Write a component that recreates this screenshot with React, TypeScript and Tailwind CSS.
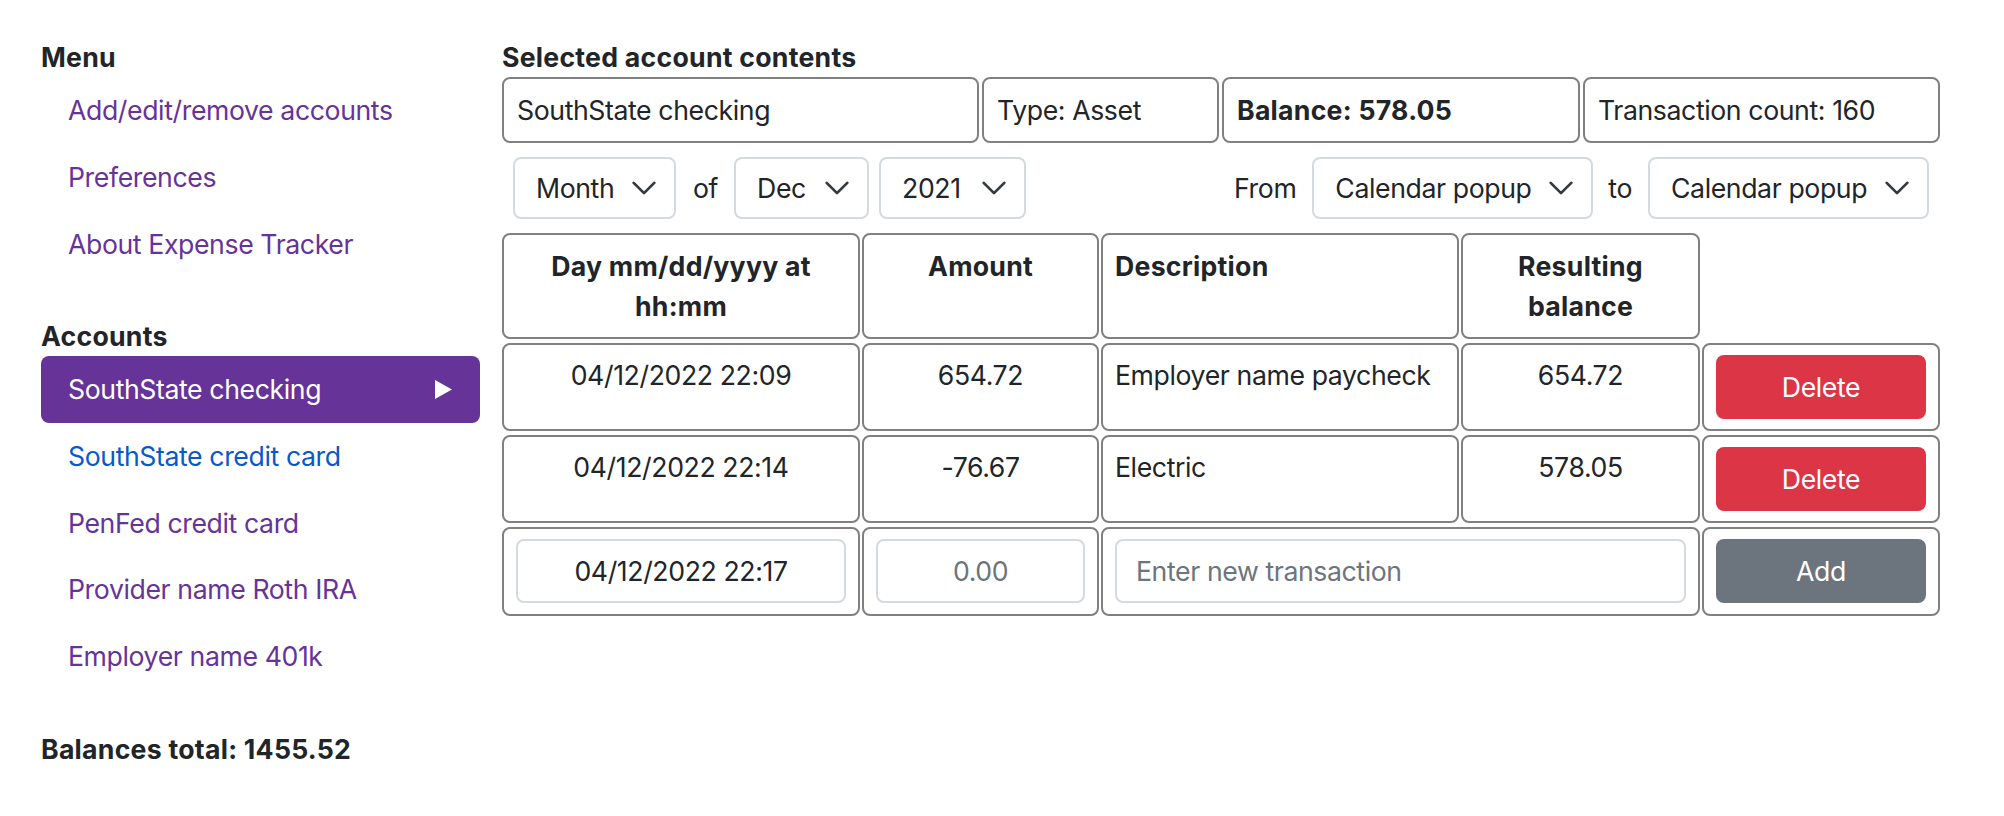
import React from "react";

function Chevron() {
  return (
    <svg width="24" height="14" viewBox="1 4 14 8" fill="none" className="shrink-0">
      <path d="M2 5l6 6 6-6" stroke="#343a40" strokeWidth="1.6" strokeLinecap="round" strokeLinejoin="round" />
    </svg>
  );
}

function Select({ label, w }: { label: string; w: string }) {
  return (
    <div className={`${w} h-[62px] flex items-center justify-between pl-[21px] pr-[18px] border-2 border-[#d5dae0] rounded-[8px] bg-white`}>
      <span>{label}</span>
      <Chevron />
    </div>
  );
}

const cell = "border-2 border-[#808080] rounded-[8px] px-[12px] py-[10px]";

export default function App() {
  const accounts = [
    { name: "SouthState credit card", color: "text-[#0a58ca]" },
    { name: "PenFed credit card", color: "text-[#663399]" },
    { name: "Provider name Roth IRA", color: "text-[#663399]" },
    { name: "Employer name 401k", color: "text-[#663399]" },
  ];
  return (
    <div className="w-[2004px] min-h-[816px] bg-white font-['Inter',sans-serif] text-[26.67px] leading-[40px] tracking-[-0.4px] text-[#212529] flex pl-[41px] pt-[37px]">
      {/* Sidebar */}
      <div className="w-[439px] flex flex-col">
        <div className="font-bold tracking-[0.25px] h-[40px]">Menu</div>
        <div className="flex flex-col">
          {["Add/edit/remove accounts", "Preferences", "About Expense Tracker"].map((t) => (
            <div key={t} className="px-[27px] py-[13.33px] text-[#663399]">{t}</div>
          ))}
        </div>
        <div className="font-bold tracking-[0.25px] h-[40px] mt-[39px]">Accounts</div>
        <div className="flex items-center justify-between px-[27px] py-[13.33px] bg-[#663399] text-white rounded-[8px]">
          <span>SouthState checking</span>
          <svg width="17" height="19" viewBox="0 0 17 19" className="mr-[1px]">
            <polygon points="0,0 17,9.5 0,19" fill="#ffffff" />
          </svg>
        </div>
        <div className="flex flex-col">
          {accounts.map((a) => (
            <div key={a.name} className={`px-[27px] py-[13.33px] ${a.color}`}>{a.name}</div>
          ))}
        </div>
        <div className="font-bold tracking-[0.25px] h-[40px] mt-[40px]">Balances total: 1455.52</div>
      </div>

      {/* Main */}
      <div className="ml-[22px] w-[1438px] flex flex-col">
        <div className="font-bold tracking-[0.25px] h-[40px]">Selected account contents</div>
        <div className="grid grid-cols-[477px_237px_358px_357px] gap-[3px]">
          <div className="border-2 border-[#808080] rounded-[8px] px-[13px] py-[11px]">SouthState checking</div>
          <div className="border-2 border-[#808080] rounded-[8px] px-[13px] py-[11px]">Type: Asset</div>
          <div className="border-2 border-[#808080] rounded-[8px] px-[13px] py-[11px] font-bold tracking-[0.25px]">Balance: 578.05</div>
          <div className="border-2 border-[#808080] rounded-[8px] px-[13px] py-[11px]">Transaction count: 160</div>
        </div>

        <div className="mt-[14px] flex items-center justify-between px-[11px]">
          <div className="flex items-center">
            <Select label="Month" w="w-[163px]" />
            <span className="ml-[17px] mr-[16px]">of</span>
            <Select label="Dec" w="w-[135px]" />
            <div className="w-[10px]" />
            <Select label="2021" w="w-[147px]" />
          </div>
          <div className="flex items-center">
            <span className="mr-[16px]">From</span>
            <Select label="Calendar popup" w="w-[281px]" />
            <span className="ml-[15px] mr-[16px]">to</span>
            <Select label="Calendar popup" w="w-[281px]" />
          </div>
        </div>

        <div className="mt-[14px] grid grid-cols-[358px_237px_358px_239px_238px] gap-x-[2px] gap-y-[4px]">
          <div className={`${cell} py-[11px] font-bold tracking-[0.25px] text-center`}>Day mm/dd/yyyy at<br />hh:mm</div>
          <div className={`${cell} py-[11px] font-bold tracking-[0.25px] text-center`}>Amount</div>
          <div className={`${cell} py-[11px] font-bold tracking-[0.25px]`}>Description</div>
          <div className={`${cell} py-[11px] font-bold tracking-[0.25px] text-center`}>Resulting<br />balance</div>
          <div />

          <div className={`${cell} text-center`}>04/12/2022 22:09</div>
          <div className={`${cell} text-center`}>654.72</div>
          <div className={cell}>Employer name paycheck</div>
          <div className={`${cell} text-center`}>654.72</div>
          <div className={cell}>
            <button className="w-full h-[64px] rounded-[8px] bg-[#dc3545] text-white">Delete</button>
          </div>

          <div className={`${cell} text-center`}>04/12/2022 22:14</div>
          <div className={`${cell} text-center`}>-76.67</div>
          <div className={cell}>Electric</div>
          <div className={`${cell} text-center`}>578.05</div>
          <div className={cell}>
            <button className="w-full h-[64px] rounded-[8px] bg-[#dc3545] text-white">Delete</button>
          </div>

          <div className={`${cell} pb-[11px]`}>
            <input readOnly value="04/12/2022 22:17" className="w-full h-[64px] border-2 border-[#d5dae0] rounded-[8px] text-center text-[#212529] outline-none" />
          </div>
          <div className={`${cell} pb-[11px]`}>
            <input readOnly placeholder="0.00" className="w-full h-[64px] border-2 border-[#d5dae0] rounded-[8px] text-center placeholder:text-[#6c757d] outline-none" />
          </div>
          <div className={`${cell} pb-[11px] col-span-2`}>
            <input readOnly placeholder="Enter new transaction" className="w-full h-[64px] border-2 border-[#d5dae0] rounded-[8px] pl-[19px] placeholder:text-[#6c757d] outline-none" />
          </div>
          <div className={`${cell} pb-[11px]`}>
            <button className="w-full h-[64px] rounded-[8px] bg-[#6c757d] text-white">Add</button>
          </div>
        </div>
      </div>
    </div>
  );
}
